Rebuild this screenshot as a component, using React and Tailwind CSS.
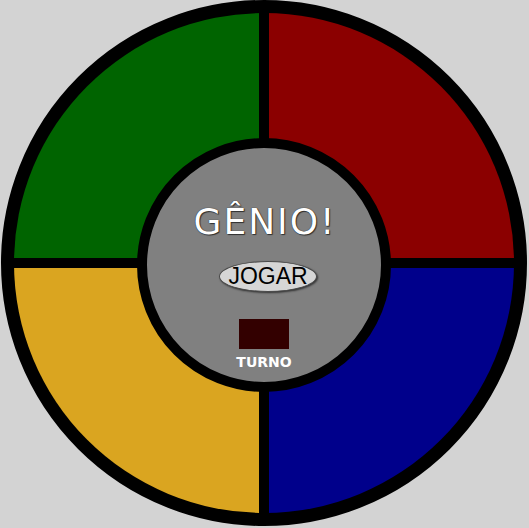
import React from 'react'

const quadrants = [
  { name: 'verde', color: 'bg-[#006400]' },
  { name: 'vermelho', color: 'bg-[#8b0000]' },
  { name: 'amarelo', color: 'bg-[#daa520]' },
  { name: 'azul', color: 'bg-[#00008b]' },
]

function CenterPanel() {
  return (
    <div className="absolute left-[123px] top-[125px] w-[254px] h-[254px] rounded-full border-[10px] border-black bg-[#808080] flex flex-col items-center pt-[53px]">
      <h1
        className="text-[36px] leading-[41px] text-white tracking-[2px] pl-[2px] [text-shadow:0_0_1px_#000,1px_1px_1px_rgba(0,0,0,0.6)]"
        style={{ fontFamily: '"DejaVu Sans", sans-serif' }}
      >
        GÊNIO!
      </h1>
      <button
        className="mt-[19px] ml-[8px] w-[98px] h-[31px] rounded-[50%] border border-[#4a4a4a] bg-[#d6d6d6] text-[23px] leading-[29px] text-black shadow-[1px_1px_2px_rgba(0,0,0,0.6)] flex items-center justify-center"
        style={{ fontFamily: '"Liberation Sans", Arial, sans-serif' }}
      >
        JOGAR
      </button>
      <div className="mt-[27px] w-[50px] h-[30px] bg-[#330000]" />
      <p
        className="mt-[5px] text-[14px] leading-[16px] font-bold text-white"
        style={{ fontFamily: '"DejaVu Sans", sans-serif' }}
      >
        TURNO
      </p>
    </div>
  )
}

export default function App() {
  return (
    <div className="w-[529px] h-[528px] bg-[#d3d3d3] overflow-hidden">
      <div className="relative ml-[1px] w-[526px] h-[526px] rounded-full border-[13px] border-black bg-black">
        <div className="w-full h-full rounded-full overflow-hidden grid grid-cols-2 grid-rows-2 gap-[10px]">
          {quadrants.map((q) => (
            <div key={q.name} className={q.color} />
          ))}
        </div>
        <CenterPanel />
      </div>
    </div>
  )
}
